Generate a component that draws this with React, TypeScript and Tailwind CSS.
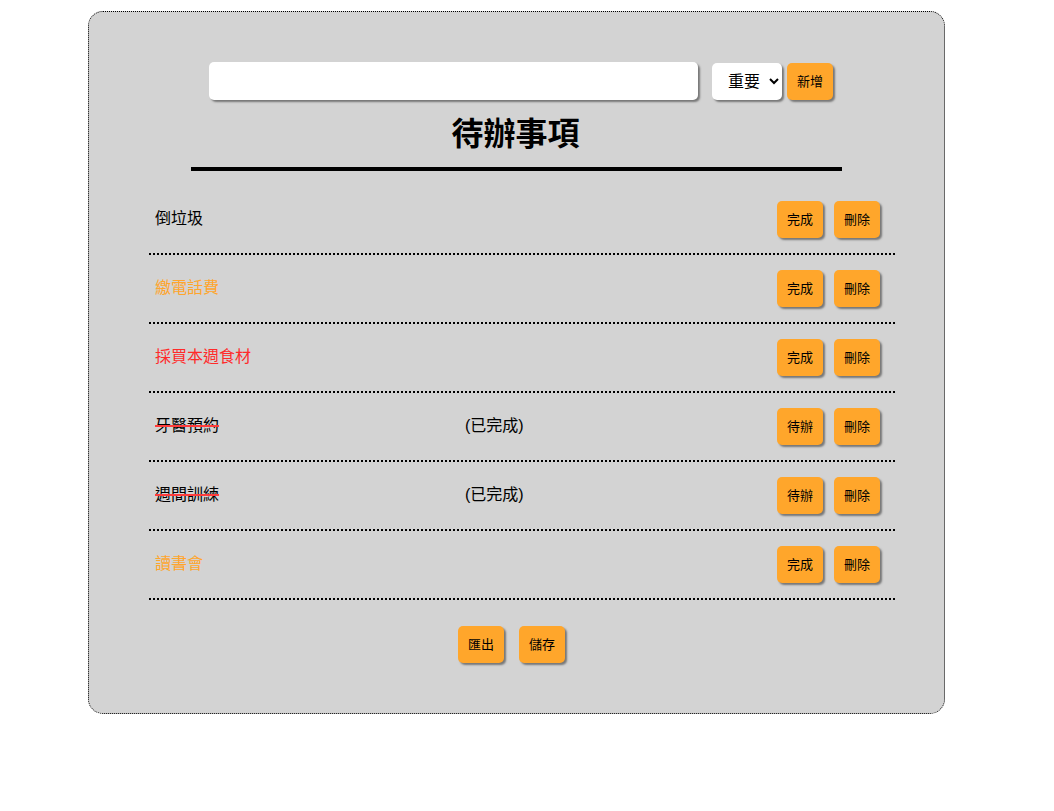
import React, { useState } from "react";

type Todo = {
  text: string;
  level: "normal" | "important" | "urgent";
  done: boolean;
};

const initialTodos: Todo[] = [
  { text: "倒垃圾", level: "normal", done: false },
  { text: "繳電話費", level: "important", done: false },
  { text: "採買本週食材", level: "urgent", done: false },
  { text: "牙醫預約", level: "normal", done: true },
  { text: "週間訓練", level: "normal", done: true },
  { text: "讀書會", level: "important", done: false },
];

const levelColor = {
  normal: "text-black",
  important: "text-[#ffa52c]",
  urgent: "text-[#ff2a2a]",
};

function Btn({ children, onClick }: { children: React.ReactNode; onClick?: () => void }) {
  return (
    <button
      onClick={onClick}
      className="w-[46px] h-[37px] rounded-[5px] bg-[#ffa62b] text-[13px] text-black shadow-[2px_2px_2px_#777]"
    >
      {children}
    </button>
  );
}

export default function App() {
  const [todos, setTodos] = useState(initialTodos);
  const [input, setInput] = useState("");

  const toggle = (i: number) =>
    setTodos(todos.map((t, idx) => (idx === i ? { ...t, done: !t.done } : t)));
  const remove = (i: number) => setTodos(todos.filter((_, idx) => idx !== i));

  return (
    <div className="min-h-[811px] bg-white pt-[11px] font-['Liberation_Sans','Noto_Sans_CJK_TC',sans-serif]">
      <div className="ml-[88px] w-[857px] h-[703px] rounded-[15px] border border-dotted border-black bg-[#d3d3d3] pt-[50px]">
        <div className="flex items-center pl-[120px]">
          <input
            value={input}
            onChange={(e) => setInput(e.target.value)}
            className="w-[489px] h-[38px] rounded-[5px] bg-white shadow-[2px_2px_2px_#777] outline-none px-2"
          />
          <select className="ml-[14px] w-[70px] h-[37px] rounded-[5px] bg-white pl-[12px] text-[16px] shadow-[2px_2px_2px_#777] outline-none">
            <option>重要</option>
          </select>
          <div className="ml-[5px] mt-[1px]">
            <Btn>新增</Btn>
          </div>
        </div>

        <h1 className="mt-[12px] text-center text-[32px] leading-[44px] font-bold pr-[2px]">待辦事項</h1>
        <div className="mt-[11px] ml-[102px] w-[651px] h-[4px] bg-black" />

        <ul className="mt-[15px] ml-[60px] w-[746px]">
          {todos.map((t, i) => (
            <li
              key={i}
              className="flex items-center h-[69px] border-b-2 border-dotted border-black pl-[6px] pr-[15px]"
            >
              <span
                className={`w-[310px] text-[16px] pb-[1px] ${levelColor[t.level]} ${
                  t.done ? "line-through decoration-[#ff3b3b] decoration-[1.5px]" : ""
                }`}
              >
                {t.text}
              </span>
              <span className="flex-1 text-[16px] pb-[1px]">{t.done ? "(已完成)" : ""}</span>
              <div className="flex gap-[11px]">
                <Btn onClick={() => toggle(i)}>{t.done ? "待辦" : "完成"}</Btn>
                <Btn onClick={() => remove(i)}>刪除</Btn>
              </div>
            </li>
          ))}
        </ul>

        <div className="mt-[26px] flex justify-center gap-[15px] pr-[10px]">
          <Btn>匯出</Btn>
          <Btn>儲存</Btn>
        </div>
      </div>
    </div>
  );
}
